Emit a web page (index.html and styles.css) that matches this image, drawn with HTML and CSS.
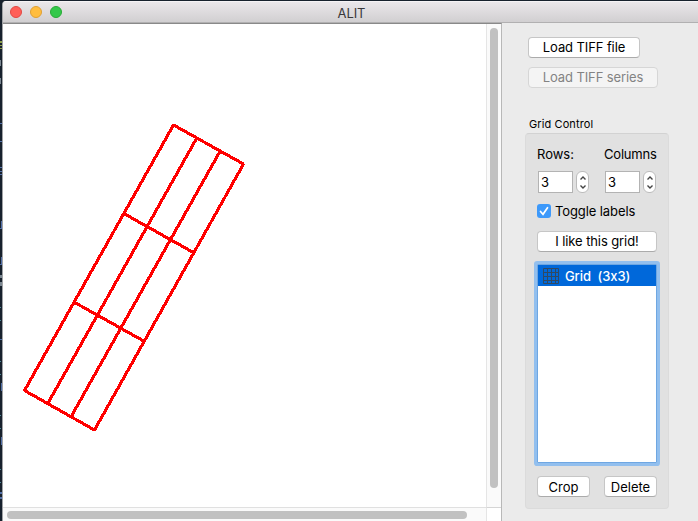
FILE: index.html
```html
<!DOCTYPE html>
<html lang="en">
<head>
<meta charset="utf-8">
<title>ALIT</title>
<link rel="stylesheet" href="styles.css">
</head>
<body>
<div class="desktop">
  <svg class="editor" width="2" height="521" shape-rendering="crispEdges">
    <path d="M0 41h2v2H0zM0 45h2v1H0zM0 48h2v1H0z" fill="#8b9c48"/>
    <path d="M0 60h1v6H0zM0 78h1v6H0zM0 275h2v3H0zM0 282h2v4H0z" fill="#7b8791"/>
    <path d="M0 123h2v1H0zM0 141h2v1H0zM0 167h2v1H0zM0 171h2v1H0zM0 174h2v1H0zM0 228h2v1H0zM1 221h1v7H1zM0 264h2v1H0zM1 257h1v7H1zM0 339h2v1H0zM1 383h1v8H1zM1 437h1v8H1zM0 492h2v2H0zM0 497h2v2H0z" fill="#526fa8"/>
    <path d="M0 307h1v1H0zM0 320h1v1H0zM0 361h1v1H0zM0 374h1v1H0zM0 415h1v1H0zM0 428h1v1H0zM0 469h1v1H0zM0 482h1v1H0z" fill="#4b8795"/>
  </svg>
  <div class="window">
    <header class="titlebar">
      <div class="lights"><i class="light close"></i><i class="light minimise"></i><i class="light zoom"></i></div>
      <h1 class="title">ALIT</h1>
    </header>
    <div class="content">
      <main class="viewer">
        <svg class="canvas" width="483" height="483" viewBox="3 24 483 483">
          <g fill="none" stroke="#f00" stroke-width="3.1" stroke-linejoin="bevel" shape-rendering="crispEdges">
            <path d="M173.5 125L243.5 164L94.5 430L24.5 390.5Z"/>
            <path d="M196.8 138L47.8 403.5M220.2 151L71.2 416.5M123.8 213.5L193.8 252.7M74.2 302.2L144.2 341.3"/>
          </g>
        </svg>
        <div class="track vertical"><div class="thumb"></div></div>
        <div class="track horizontal"><div class="thumb"></div></div>
        <div class="corner"></div>
      </main>
      <aside class="panel">
        <button class="button load-file"><span>Load TIFF file</span></button>
        <button class="button load-series" disabled><span>Load TIFF series</span></button>
        <h2 class="group-title">Grid Control</h2>
        <section class="group">
          <div class="fields">
            <div class="field">
              <span class="label rows">Rows:</span>
              <div class="spin"><span class="value">3</span><span class="stepper"><svg width="12" height="20" viewBox="0 0 12 20"><path d="M3.5 7.5L6 5l2.5 2.5M3.5 13.5L6 16l2.5-2.5"/></svg></span></div>
            </div>
            <div class="field">
              <span class="label columns">Columns</span>
              <div class="spin"><span class="value">3</span><span class="stepper"><svg width="12" height="20" viewBox="0 0 12 20"><path d="M3.5 7.5L6 5l2.5 2.5M3.5 13.5L6 16l2.5-2.5"/></svg></span></div>
            </div>
          </div>
          <div class="toggle">
            <span class="checkbox"><svg width="14" height="14" viewBox="0 0 14 14"><path d="M3.5 7.5L6 10.3L10.5 3.7"/></svg></span>
            <span class="toggle-text">Toggle labels</span>
          </div>
          <button class="button like"><span>I like this grid!</span></button>
          <div class="list">
            <div class="item">
              <svg class="grid-icon" width="16" height="16" viewBox="0 0 16 16"><path d="M.5 .5h15v15H.5zM4.5 0v16M8.5 0v16M12.5 0v16M0 4.5h16M0 8.5h16M0 12.5h16"/></svg>
              <span class="item-text">Grid&nbsp; (3x3)</span>
            </div>
          </div>
          <div class="actions">
            <button class="button crop"><span>Crop</span></button>
            <button class="button delete"><span>Delete</span></button>
          </div>
        </section>
      </aside>
    </div>
  </div>
</div>
</body>
</html>
```
FILE: styles.css
```css
* { box-sizing: border-box; }
body {
  margin: 0;
  overflow: hidden;
  font: 13px/16px Inter, "Open Sans", sans-serif;
  color: #000;
}
.desktop { display: flex; width: 698px; height: 521px; padding-top: 1px; background: #17212d; }
.editor { flex: none; margin-top: -1px; }
.window { width: 696px; height: 520px; border-left: 1px solid #a0a2a5; border-top-left-radius: 4px; background: #ebebeb; overflow: hidden; }
.titlebar {
  display: grid;
  grid-template-columns: 1fr auto 1fr;
  align-items: center;
  height: 22px;
  background: linear-gradient(#eae7ea, #d1cfd1);
  border-top: 1px solid #f5f3f5;
  border-bottom: 1px solid #b1b0b1;
}
.lights { display: flex; gap: 8px; padding-left: 7px; }
.light { width: 12px; height: 12px; border-radius: 50%; border: 1px solid; }
.close { background: #ff5f58; border-color: #e24843; }
.minimise { background: #ffbd3f; border-color: #dfa033; }
.zoom { background: #34c84a; border-color: #27aa35; }
.title { margin: 0; padding-top: 1px; font-size: 13px; line-height: 16px; font-weight: 400; letter-spacing: -.1px; color: #39383a; transform: translateX(1px); }
.content { display: flex; height: 498px; }
.viewer {
  display: grid;
  grid-template-columns: 483px 15px;
  grid-template-rows: 483px 14px;
  width: 499px;
  border-top: 1px solid #898989;
  border-right: 1px solid #b8b8b8;
  background: #fff;
}
.canvas { display: block; }
.track { background: #fafafa; }
.thumb { background: #c1c1c1; border-radius: 4px; }
.vertical { border-left: 1px solid #e5e5e5; padding: 4px 0 0 3px; }
.vertical .thumb { width: 8px; height: 460px; }
.horizontal { border-top: 1px solid #e0e0e0; padding: 3px 0 0 4px; }
.horizontal .thumb { width: 460px; height: 8px; }
.corner { border-top: 1px solid #d5d5d5; border-left: 1px solid #e5e5e5; background: #fff; }
.panel { display: flex; flex-direction: column; align-items: flex-start; width: 196px; padding: 14px 0 0 23px; }
.button {
  display: flex;
  align-items: center;
  justify-content: center;
  height: 21px;
  padding: 0 0 1px;
  border: 1px solid #c6c6c6;
  border-bottom-color: #ababab;
  border-radius: 4px;
  background: #fff;
  color: #000;
  font: inherit;
  white-space: nowrap;
}
.load-file { width: 112px; margin-left: 3px; letter-spacing: -.1px; }
.load-series { width: 130px; margin: 9px 0 0 3px; letter-spacing: -.1px; }
.load-series:disabled { color: #838383; background: #f4f4f4; border-color: #d6d6d6; }
.group-title { margin: 29px 0 0 4px; font-size: 11px; line-height: 14px; font-weight: 400; letter-spacing: .1px; }
.group { width: 144px; height: 376px; margin-top: 2px; padding: 12px 11px 0; border: 1px solid #dbdbdb; border-top-color: #d2d2d2; border-radius: 4px; background: #e1e1e1; }
.fields { display: flex; gap: 15px; }
.field { width: 52px; }
.label { display: block; height: 16px; white-space: nowrap; }
.columns { letter-spacing: -.2px; }
.spin { display: flex; gap: 3px; margin-top: 9px; padding-left: 1px; }
.value { width: 36px; height: 22px; padding: 2px 2px 0; border: 1px solid #b3b3b3; background: #fff; }
.stepper { display: flex; justify-content: center; width: 13px; height: 22px; border: 1px solid #bcbcbc; border-radius: 6px; background: #fff; }
.stepper svg { flex: none; }
.stepper path { fill: none; stroke: #444; stroke-width: 1.4; }
.toggle { display: flex; align-items: center; gap: 4px; height: 16px; margin-top: 10px; }
.checkbox { display: flex; width: 14px; height: 14px; border-radius: 3px; background: #3d99fa; }
.checkbox path { fill: none; stroke: #fff; stroke-width: 1.7; stroke-linecap: round; }
.toggle-text { letter-spacing: -.1px; }
.like { width: 120px; margin-top: 12px; letter-spacing: -.1px; }
.list { width: 120px; height: 199px; margin-top: 12px; border: 1px solid #6fa7e2; background: #fff; box-shadow: 0 0 0 3px #92bfee; border-radius: 1px; }
.item { display: flex; align-items: center; gap: 6px; height: 21px; padding-left: 5px; background: #0068da; color: #fff; font-weight: 500; }
.grid-icon path { fill: none; stroke: #304963; stroke-width: 1; }
.item-text { letter-spacing: -.1px; }
.actions { display: flex; gap: 14px; margin-top: 13px; }
.crop, .delete { width: 53px; padding: 0; }
```
